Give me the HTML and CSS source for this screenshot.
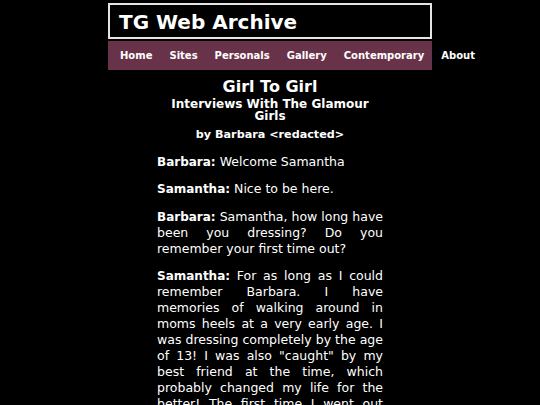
FILE: index.html
```html
<!DOCTYPE html>
<html>
<head>
<meta charset="utf-8">
<link rel="stylesheet" href="styles.css">
</head>
<body>
<div class="wrap">
  <div class="masthead">TG Web Archive</div>
  <nav class="nav">
    <a href="#">Home</a>
    <a href="#">Sites</a>
    <a href="#">Personals</a>
    <a href="#">Gallery</a>
    <a href="#">Contemporary</a>
    <a href="#">About</a>
  </nav>
</div>
<main class="article">
  <h1 class="title">Girl To Girl</h1>
  <h2 class="subtitle">Interviews With The Glamour Girls</h2>
  <h3 class="byline">by Barbara &lt;redacted&gt;</h3>
  <p><b>Barbara:</b> Welcome Samantha</p>
  <p><b>Samantha:</b> Nice to be here.</p>
  <p><b>Barbara:</b> Samantha, how long have been you dressing? Do you remember your first time out?</p>
  <p><b>Samantha:</b> For as long as I could remember Barbara. I have memories of walking around in moms heels at a very early age. I was dressing completely by the age of 13! I was also "caught" by my best friend at the time, which probably changed my life for the better! The first time I went out was when I was about 16 years old.</p>
</main>
</body>
</html>
```
FILE: styles.css
```css
html, body {
  margin: 0;
  padding: 0;
  background: #000;
  color: #fff;
  font-family: "DejaVu Sans", Verdana, sans-serif;
}
.wrap {
  width: 324px;
  margin: 3px auto 0;
}
.masthead {
  border: 2px solid #e4e4e4;
  height: 31px;
  padding: 1px 0 0 9px;
  font-size: 20px;
  font-weight: bold;
  line-height: 33px;
}
.nav {
  background: #683349;
  height: 29px;
  margin-top: 2px;
  display: flex;
  flex-wrap: nowrap;
  align-items: center;
  padding-left: 12px;
  gap: 17px;
}
.nav a {
  color: #fff;
  text-decoration: none;
  font-size: 10px;
  font-weight: bold;
  white-space: nowrap;
}
.article {
  width: 226px;
  margin: 0 auto;
  padding-top: 7px;
}
.title {
  text-align: center;
  font-size: 16px;
  margin: 0;
  line-height: 20px;
}
.subtitle {
  text-align: center;
  font-size: 12px;
  margin: 1px 0 0;
  line-height: 12px;
}
.byline {
  text-align: center;
  font-size: 11.2px;
  margin: 6px 0 0;
  line-height: 14px;
}
.article p {
  font-size: 12.5px;
  line-height: 15.9px;
  text-align: justify;
  margin: 11.7px 0 0;
}
.article p b {
  font-size: 12px;
  line-height: 0;
}
```
